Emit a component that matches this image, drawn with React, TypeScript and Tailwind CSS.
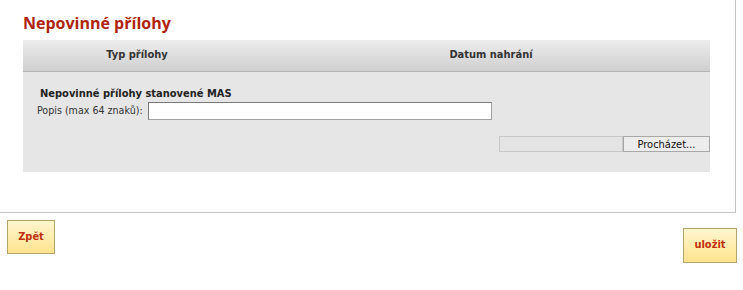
export default function App() {
  const ui = { fontFamily: '"DejaVu Sans Condensed", "Liberation Sans", sans-serif' };
  return (
    <div className="w-[743px] h-[290px] bg-white overflow-hidden" style={ui}>
      {/* Main panel — only right and bottom edges are visible */}
      <div className="w-[736px] h-[213px] border-r border-b border-[#c4c4c4] pt-[14px]">
        <h2
          className="pl-[23px] text-[16px] leading-[19px] font-bold text-[#b0230f]"
          style={{ fontFamily: '"Open Sans", "Liberation Sans", sans-serif' }}
        >
          Nepovinné přílohy
        </h2>

        <div className="ml-[23px] mt-[7px] w-[687px]">
          {/* Header */}
          <div className="flex h-[32px] items-center border-b border-[#b4b4b4] bg-gradient-to-b from-[#ededed] to-[#cfcfcf] text-[11px] font-bold text-[#333]">
            <div className="w-[228px] text-center">Typ přílohy</div>
            <div className="flex-1 pl-[21px] text-center">Datum nahrání</div>
          </div>

          {/* Body */}
          <div className="h-[100px] bg-[#e6e6e6] pt-[15px] text-[11px] text-[#222]">
            <div className="pl-[17px] font-bold leading-[13px]">Nepovinné přílohy stanovené MAS</div>
            <div className="mt-[2px] flex items-center pl-[14px]">
              <span className="text-[10.6px] text-[#333]">Popis (max 64 znaků):</span>
              <input
                type="text"
                className="ml-[5px] h-[18px] w-[344px] border border-[#7a7a7a] border-b-[#a0a0a0] border-r-[#a0a0a0] bg-white outline-none"
              />
            </div>
            <div className="mt-[16px] flex justify-end">
              <div className="h-[16px] w-[124px] border border-[#c8c8c8] bg-[#e4e4e4]" />
              <button className="flex h-[16px] w-[87px] items-center justify-center border border-[#a8a8a8] bg-[#ececec] text-[11px] leading-none text-[#111]">
                Procházet...
              </button>
            </div>
          </div>
        </div>
      </div>

      {/* Action buttons */}
      <div className="flex items-start justify-between pl-[7px] pr-[6px]">
        <button className="mt-[7px] h-[34px] w-[48px] border border-[#b6a36e] bg-gradient-to-b from-[#fff6cf] to-[#ffe38e] text-[11px] font-bold text-[#c0300c]">
          Zpět
        </button>
        <button className="mt-[15px] h-[35px] w-[54px] border border-[#b6a36e] bg-gradient-to-b from-[#fff6cf] to-[#ffe38e] text-[11px] font-bold text-[#c0300c]">
          uložit
        </button>
      </div>
    </div>
  );
}
